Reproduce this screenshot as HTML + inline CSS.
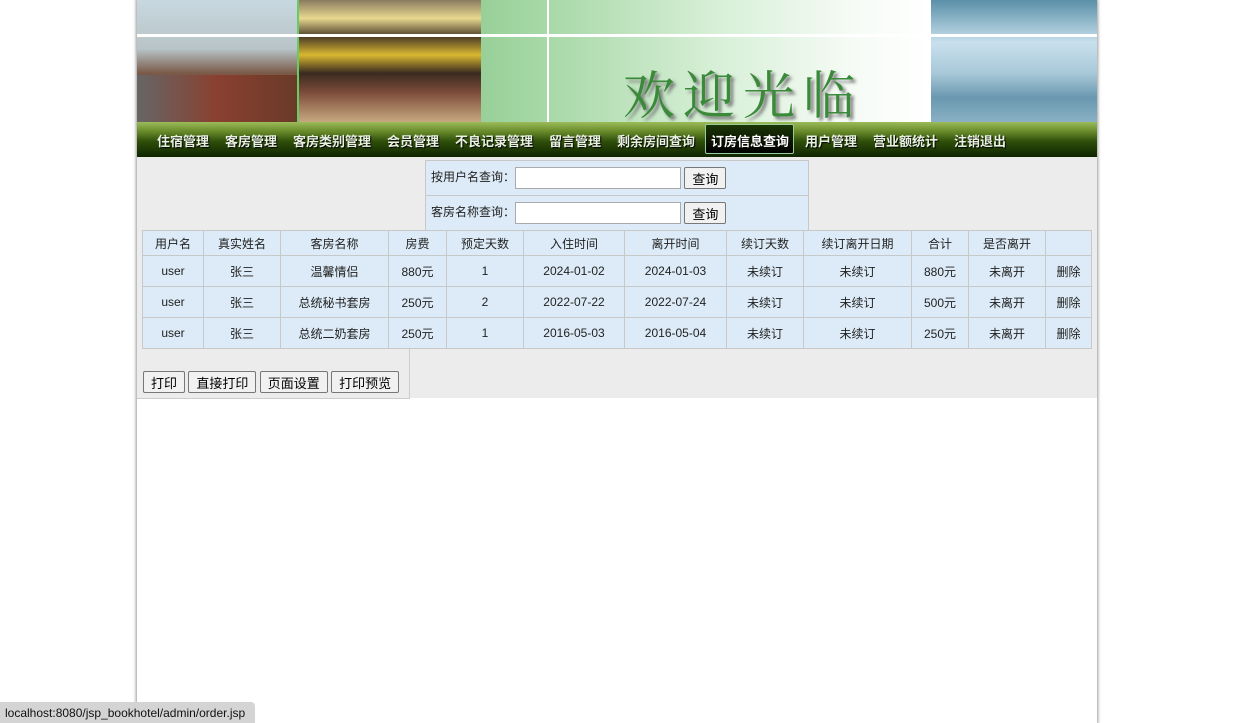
<!DOCTYPE html>
<html><head><meta charset="utf-8"><style>
*{margin:0;padding:0;box-sizing:border-box}
body{width:1234px;height:723px;background:#fff;position:relative;overflow:hidden;font-family:"Liberation Sans","Noto Sans CJK SC",sans-serif;font-size:12px;color:#222}
.wrap{position:absolute;left:137px;top:0;width:960px;height:723px;background:#fff;box-shadow:0 0 3px 1px #999}
.a{position:absolute}
.nav{left:0;top:122px;width:960px;height:35px;background:linear-gradient(#9cbc5a 0,#6d8e2d 25%,#2f4f0a 55%,#0e2400 100%)}
.nav span{position:absolute;top:9px;color:#e8f0e0;font-weight:bold;font-size:13px;text-shadow:1px 1px 1px #000}
.act{position:absolute;left:568px;top:2px;width:89px;height:30px;border:1px solid #9c9;background:linear-gradient(#1b3505,#000);border-radius:2px}
.gray{left:0;top:157px;width:960px;height:241px;background:#ececec}
table{border-collapse:collapse;position:absolute}
td{border:1px solid #c8c8c8;background:#dcebf7;text-align:center;font-size:12px}
input.t{width:166px;height:22px;border:1px solid #aaa;background:#fff;vertical-align:middle}
button{font-family:"Liberation Sans","Noto Sans CJK SC",sans-serif;font-size:13px;border:1px solid #777;background:#f1f1f1;border-radius:2px;height:22px;padding:0 7px;color:#000;vertical-align:middle}
</style></head><body>
<div class="wrap">
 <div class="a" style="left:0;top:0;width:160px;height:122px;background:linear-gradient(#c8d8e0 0,#b8c4c8 40%,#7a5a48 60%,#8a4a30 80%,#444 100%)"></div>
 <div class="a" style="left:0;top:75px;width:160px;height:47px;background:linear-gradient(90deg,#666,#8a4030 50%,#6a3a28)"></div>
 <div class="a" style="left:160px;top:0;width:184px;height:122px;background:linear-gradient(#8a7a60 0,#e8d890 15%,#4a3a28 30%,#d8b830 45%,#3a2a20 60%,#7a4a38 75%,#c8a880 100%)"></div>
 <div class="a" style="left:160px;top:0;width:2px;height:122px;background:#6c6"></div>
 <div class="a" style="left:344px;top:0;width:67px;height:122px;background:linear-gradient(90deg,#98d098,#a8d8a8)"></div>
 <div class="a" style="left:411px;top:0;width:383px;height:122px;background:linear-gradient(90deg,#a8d8a8 0,#d8f0d8 45%,#f6fbf6 80%,#ffffff 100%)"></div>
 <div class="a" style="left:794px;top:0;width:166px;height:122px;background:linear-gradient(#5a90a8 0,#c8e0ec 35%,#a8c8d8 60%,#6a98b0 80%,#8ab0c4 100%)"></div>
 <div class="a" style="left:0;top:34px;width:960px;height:3px;background:#fff"></div>
 <div class="a" style="left:410px;top:0;width:2px;height:122px;background:#fff"></div>
 <div class="a" style="left:486px;top:54px;font-size:52px;color:#3a8a3a;letter-spacing:8px;font-family:'Noto Serif CJK SC',serif;text-shadow:3px 3px 3px #777">欢迎光临</div>
 <div class="a nav"><div class="act"></div>
  <span style="left:20px">住宿管理</span><span style="left:88px">客房管理</span><span style="left:156px">客房类别管理</span><span style="left:250px">会员管理</span><span style="left:318px">不良记录管理</span><span style="left:412px">留言管理</span><span style="left:480px">剩余房间查询</span><span style="left:574px;color:#fff">订房信息查询</span><span style="left:668px">用户管理</span><span style="left:736px">营业额统计</span><span style="left:817px">注销退出</span>
 </div>
 <div class="a gray"></div>
 <table style="left:288px;top:160px;width:384px">
  <tr style="height:35px"><td style="text-align:left;padding-left:5px">按用户名查询：<input class="t"> <button>查询</button></td></tr>
  <tr style="height:35px"><td style="text-align:left;padding-left:5px">客房名称查询：<input class="t"> <button>查询</button></td></tr>
 </table>
 <table style="left:5px;top:230px;width:950px">
  <tr style="height:25px"><td style="width:61px">用户名</td><td style="width:77px">真实姓名</td><td style="width:108px">客房名称</td><td style="width:58px">房费</td><td style="width:77px">预定天数</td><td style="width:101px">入住时间</td><td style="width:102px">离开时间</td><td style="width:77px">续订天数</td><td style="width:108px">续订离开日期</td><td style="width:57px">合计</td><td style="width:77px">是否离开</td><td></td></tr>
  <tr style="height:31px"><td>user</td><td>张三</td><td>温馨情侣</td><td>880元</td><td>1</td><td>2024-01-02</td><td>2024-01-03</td><td>未续订</td><td>未续订</td><td>880元</td><td>未离开</td><td>删除</td></tr>
  <tr style="height:31px"><td>user</td><td>张三</td><td>总统秘书套房</td><td>250元</td><td>2</td><td>2022-07-22</td><td>2022-07-24</td><td>未续订</td><td>未续订</td><td>500元</td><td>未离开</td><td>删除</td></tr>
  <tr style="height:31px"><td>user</td><td>张三</td><td>总统二奶套房</td><td>250元</td><td>1</td><td>2016-05-03</td><td>2016-05-04</td><td>未续订</td><td>未续订</td><td>250元</td><td>未离开</td><td>删除</td></tr>
 </table>
 <div class="a" style="left:0;top:349px;width:273px;height:50px;border:1px solid #ccc;border-top:none;border-left:none"></div>
 <div class="a" style="left:6px;top:371px;white-space:nowrap"><button>打印</button> <button>直接打印</button> <button>页面设置</button> <button>打印预览</button></div>
</div>
<div class="a" style="left:0;top:702px;width:255px;height:21px;background:#d4d4d4;border-radius:0 4px 0 0;font-size:12px;padding:4px 0 0 5px;color:#111">localhost:8080/jsp_bookhotel/admin/order.jsp</div>
</body></html>
